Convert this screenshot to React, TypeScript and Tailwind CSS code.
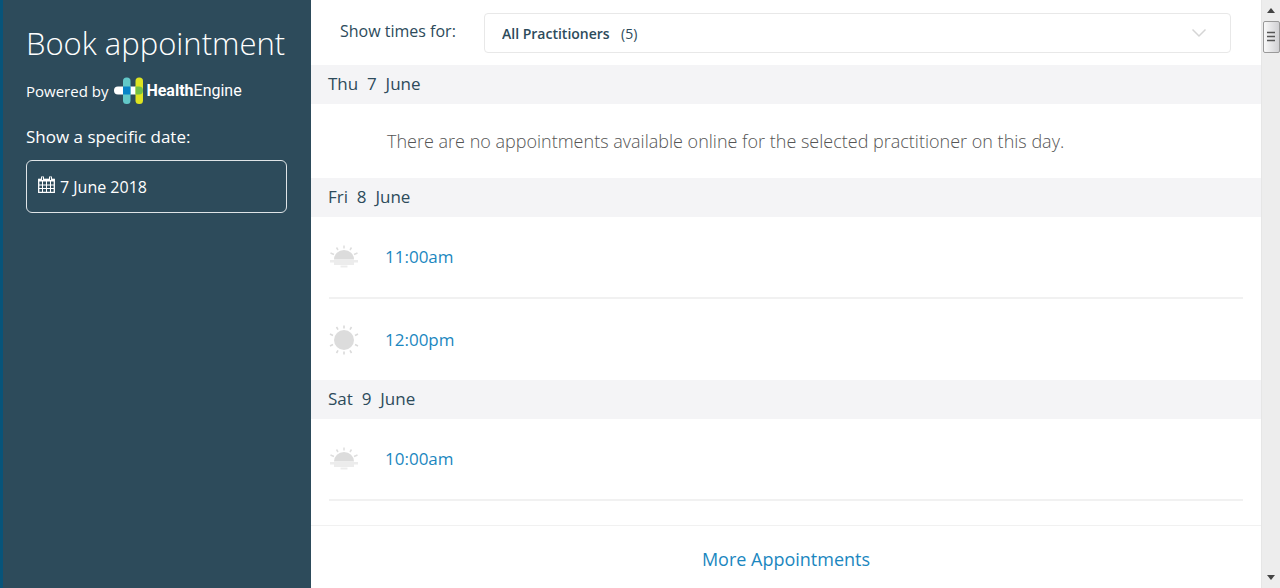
import { useState } from "react";

type Period = "morning" | "midday";
type Slot = { time: string; period: Period };
type Day = { label: string; slots: Slot[]; continues?: boolean };

const days: Day[] = [
  { label: "Thu  7  June", slots: [] },
  {
    label: "Fri  8  June",
    slots: [
      { time: "11:00am", period: "morning" },
      { time: "12:00pm", period: "midday" },
    ],
  },
  {
    label: "Sat  9  June",
    slots: [{ time: "10:00am", period: "morning" }],
    continues: true,
  },
];

function CalendarIcon() {
  return (
    <svg viewBox="0 0 17 17" className="pointer-events-none absolute top-4 left-3 h-[17px] w-[17px]" fill="none" stroke="white" aria-hidden="true">
      <path d="M0.7 3.5h15.6v12.8H0.7z" strokeWidth="1.3" />
      <path d="M0.5 4.2h16" strokeWidth="2.6" />
      <path d="M4.5 5v11M8.500 5v11M12.500 5v11M1 9h15M1 12.500h15" strokeWidth="1" />
      <path d="M4.500 0.500v4M12.500 0.500v4" strokeWidth="3" />
      <path d="M4.500 1.200v2.800M12.500 1.200v2.800" stroke="#2d4b5b" strokeWidth="0.900" />
    </svg>
  );
}

function HealthEngineMark() {
  return (
    <svg viewBox="0 0 30 28" className="h-7 w-[30px]" aria-hidden="true">
      <rect x="0" y="9.5" width="29" height="8" rx="4" fill="white" />
      <rect x="9" y="0.5" width="7.5" height="26.5" rx="3.5" fill="#62c8c8" />
      <rect x="21.5" y="0.5" width="7.5" height="26.5" rx="3.5" fill="#dde321" />
      <rect x="9" y="9.5" width="7.5" height="8" fill="#0884c7" />
      <path d="M21.5 9.5H25a4 4 0 0 1 0 8h-3.5z" fill="#73bf44" />
    </svg>
  );
}

function MorningIcon() {
  return (
    <svg viewBox="0 0 30 30" className="h-[30px] w-[30px]" aria-hidden="true">
      <path d="M5 17.500a10 9.500 0 0 1 20 0z" fill="#dcdcdc" />
      <path d="M15 3.500v3M7.500 5.500l1.500 2.500M22.500 5.500l-1.500 2.500M1.500 11l3.500 1.500M28.500 11l-3.500 1.500" stroke="#dedede" strokeWidth="1.500" />
      <path d="M1 18h28v2.500H1zM5 20h20v3H5z" fill="#ececec" />
      <path d="M11.500 24.500h7" stroke="#ececec" strokeWidth="2" />
    </svg>
  );
}

function MiddayIcon() {
  return (
    <svg viewBox="0 0 30 30" className="h-[30px] w-[30px]" aria-hidden="true">
      <circle cx="15" cy="15" r="10" fill="#dcdcdc" />
      <path d="M15 0.500v3M15 26.500v3M7.500 2l1.500 2.600M21 25.400l1.500 2.600M22.500 2L21 4.600M9 25.400L7.500 28M1 9l3 1.500M26 19.500l3 1.500M29 9l-3 1.500M4 19.500l-3 1.500" stroke="#dadada" strokeWidth="1.600" />
    </svg>
  );
}

function Sidebar() {
  const [date, setDate] = useState("7 June 2018");
  return (
    <aside className="w-[311px] shrink-0 border-l-[3px] border-[#07547a] bg-[#2d4b5b] pt-[21px] pr-6 pl-[23px] text-white">
      <h1 className="text-[31px] leading-[44px] font-light whitespace-nowrap">Book appointment</h1>
      <div className="mt-3 flex h-7 items-center whitespace-nowrap">
        <span className="text-[15px]">Powered by</span>
        <a href="#healthengine" className="ml-[6px] flex items-center">
          <HealthEngineMark />
          <span className="ml-0.5 font-[Roboto,sans-serif] text-[16px]">
            <b>Health</b>Engine
          </span>
        </a>
      </div>
      <label htmlFor="date" className="mt-5 block text-[17px] leading-6 font-medium">
        Show a specific date:
      </label>
      <div className="relative mt-[11px]">
        <CalendarIcon />
        <input
          id="date"
          value={date}
          onChange={(e) => setDate(e.target.value)}
          className="block h-[53px] w-full rounded-md border border-[#dfe4e7] bg-transparent pl-[33px] text-base"
        />
      </div>
    </aside>
  );
}

function PractitionerFilter() {
  return (
    <div className="flex h-[65px] shrink-0 items-center pr-[30px] pl-[29px]">
      <label htmlFor="practitioner" className="w-36 shrink-0 pb-1 text-base whitespace-nowrap">
        Show times for:
      </label>
      <div className="relative flex flex-1 items-center">
        <select id="practitioner" className="h-10 w-full appearance-none rounded border border-[#e8e8e8] bg-white px-[17px] pt-0.5 text-sm font-semibold">
          <option>All Practitioners</option>
        </select>
        <span className="pointer-events-none absolute left-[137px] pt-0.5 text-sm">(5)</span>
        <svg viewBox="0 0 16 10" className="pointer-events-none absolute right-6 h-[10px] w-4" fill="none" stroke="#d5d5d5" strokeWidth="1.5" aria-hidden="true">
          <path d="M1.500 1.500L8 8l6.500-6.500" />
        </svg>
      </div>
    </div>
  );
}

function DaySection({ day }: { day: Day }) {
  return (
    <section>
      <h2 className="h-[39px] bg-[#f4f4f6] px-[17px] text-[17px] leading-[38px] whitespace-pre">{day.label}</h2>
      {day.slots.length === 0 ? (
        <p className="h-[74px] pl-[76px] text-lg leading-[75px] font-light text-[#555]">
          There are no appointments available online for the selected practitioner on this day.
        </p>
      ) : (
        <ul className="px-[18px]">
          {day.slots.map((slot, i) => (
            <li
              key={slot.time}
              className={
                i < day.slots.length - 1 || day.continues
                  ? "flex h-[82px] items-center border-b-2 border-[#f1f1f1]"
                  : "flex h-[81px] items-center"
              }
            >
              {slot.period === "morning" ? <MorningIcon /> : <MiddayIcon />}
              <a href="#book" className="ml-[26px] text-[17px] text-[#1b87c0]">
                {slot.time}
              </a>
            </li>
          ))}
        </ul>
      )}
    </section>
  );
}

function ScrollTrack() {
  return (
    <div className="flex w-[19px] shrink-0 flex-col items-center border-l border-[#e6e6e6] bg-[#ededed] py-2" aria-hidden="true">
      <svg viewBox="0 0 8 5" className="h-[5px] w-2">
        <path d="M0 5l4-5 4 5z" fill="#444" />
      </svg>
      <svg viewBox="0 0 17 32" className="mt-2 h-8 w-[17px]">
        <defs>
          <linearGradient id="thumb">
            <stop stopColor="#fafafa" />
            <stop offset="1" stopColor="#cfcfd2" />
          </linearGradient>
        </defs>
        <rect x="0.500" y="0.500" width="16" height="31" rx="1.500" fill="url(#thumb)" stroke="#999" />
        <path d="M4 11.500h8M4 15.500h8M4 19.500h8" stroke="#555" strokeWidth="1.300" />
      </svg>
      <svg viewBox="0 0 8 5" className="mt-auto h-[5px] w-2">
        <path d="M0 0l4 5 4-5z" fill="#444" />
      </svg>
    </div>
  );
}

export default function App() {
  return (
    <div className="flex h-screen bg-white font-['Open_Sans',sans-serif] text-[#2d4b5b]">
      <Sidebar />
      <main className="flex min-w-0 flex-1 flex-col">
        <PractitionerFilter />
        <div className="min-h-0 flex-1 overflow-hidden">
          {days.map((day) => (
            <DaySection key={day.label} day={day} />
          ))}
        </div>
        <footer className="flex h-[63px] shrink-0 items-center justify-center border-t border-[#f1f1f1]">
          <button type="button" className="pt-1 text-lg text-[#1b87c0]">
            More Appointments
          </button>
        </footer>
      </main>
      <ScrollTrack />
    </div>
  );
}
